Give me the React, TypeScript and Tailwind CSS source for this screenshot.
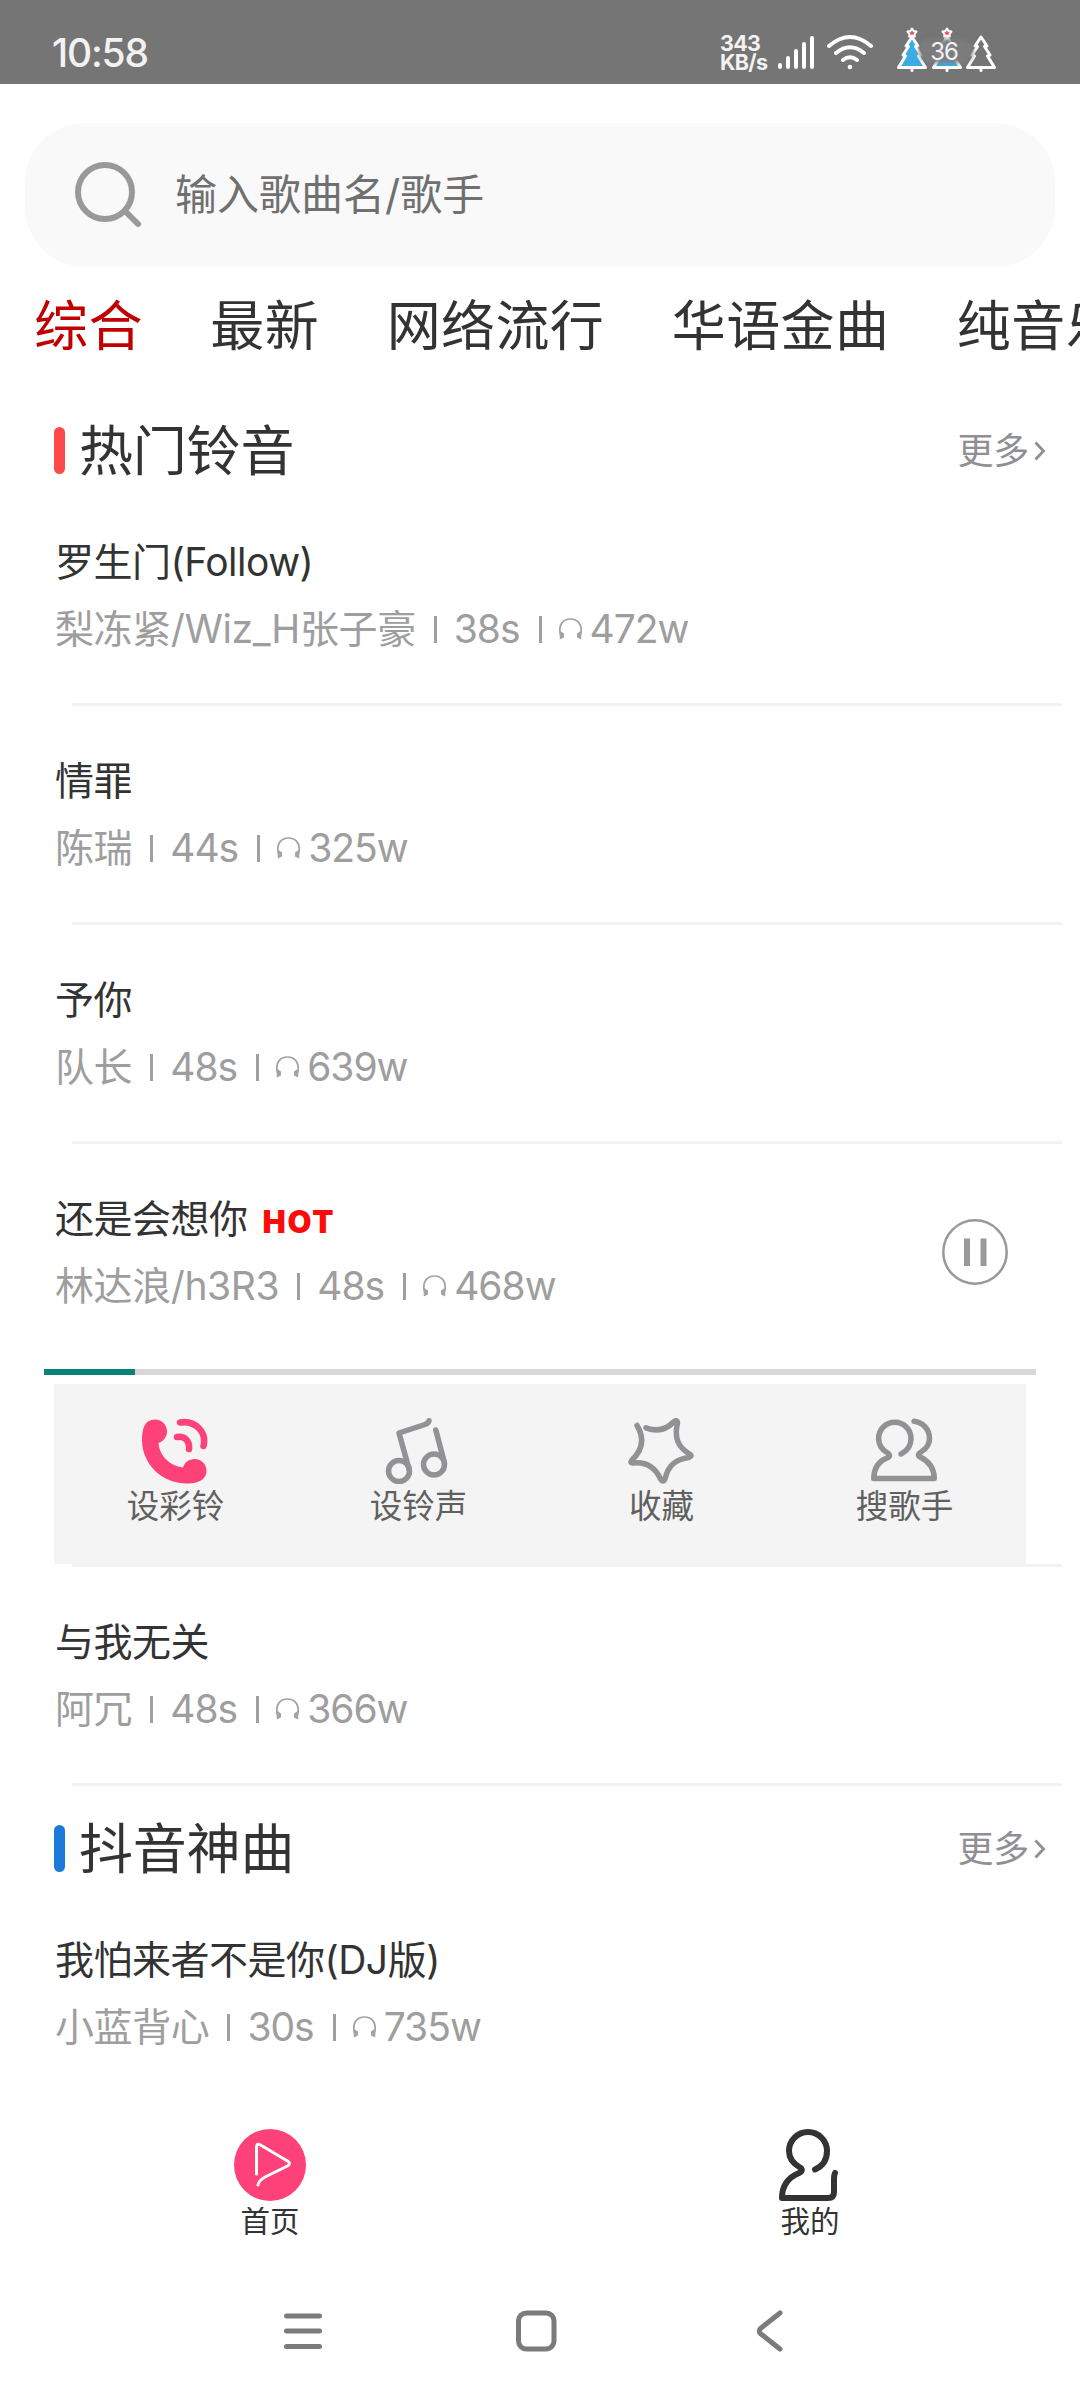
import React from 'react';

interface Song {
  title: string;
  artist: string;
  duration: string;
  plays: string;
  hot?: boolean;
  playing?: boolean;
}

interface Section {
  name: string;
  barClass: string;
  songs: Song[];
}

const tabs = ['综合', '最新', '网络流行', '华语金曲', '纯音乐'];

const sections: Section[] = [
  {
    name: '热门铃音',
    barClass: 'bg-[#fc4a4a]',
    songs: [
      { title: '罗生门(Follow)', artist: '梨冻紧/Wiz_H张子豪', duration: '38s', plays: '472w' },
      { title: '情罪', artist: '陈瑞', duration: '44s', plays: '325w' },
      { title: '予你', artist: '队长', duration: '48s', plays: '639w' },
      { title: '还是会想你', artist: '林达浪/h3R3', duration: '48s', plays: '468w', hot: true, playing: true },
      { title: '与我无关', artist: '阿冗', duration: '48s', plays: '366w' },
    ],
  },
  {
    name: '抖音神曲',
    barClass: 'bg-[#1a7ad9]',
    songs: [{ title: '我怕来者不是你(DJ版)', artist: '小蓝背心', duration: '30s', plays: '735w' }],
  },
];

const Tree: React.FC<{ x: number; fill: string; star?: boolean }> = ({ x, fill, star }) => (
  <g transform={`translate(${x} 0)`}>
    <path
      d="M0 10 L6 19 L3.5 19.5 L9 28 L6.5 29 L13.5 40.5 H-13.5 L-6.5 29 L-9 28 L-3.5 19.5 L-6 19 Z"
      fill={fill}
      stroke="#fff"
      strokeWidth="3"
      strokeLinejoin="round"
    />
    <path d="M0 41 V43.5" stroke="#fff" strokeWidth="3" strokeLinecap="round" />
    {star && (
      <path
        d="M0 1.5 L1.6 4 L4.5 4.6 L2.6 7 L2.8 9.6 L0 8.6 L-2.8 9.6 L-2.6 7 L-4.5 4.6 L-1.6 4 Z"
        fill="#f2566a"
        stroke="#fff"
        strokeWidth="2"
        strokeLinejoin="round"
      />
    )}
  </g>
);

const StatusBar = () => (
  <div className="flex h-[84px] shrink-0 items-start bg-[#757575] pl-[52px] text-[#f2f2f2]">
    <div className="mt-[29px] w-[668px] text-[39px] leading-[48px] font-medium tracking-[-1.2px]">10:58</div>
    <div className="mt-[34px] w-[58px] text-[21.5px] leading-[19px] font-bold tracking-[-0.7px]">
      <div>343</div>
      <div>KB/s</div>
    </div>
    <svg className="mt-[34px] h-[37px] w-[38px]" viewBox="0 0 38 37" stroke="#fff" strokeWidth="4" strokeLinecap="round">
      <path d="M2 31V33M10 24V33M18 17V33M26 10V33M34 4V33" />
    </svg>
    <svg className="mt-[32px] ml-[10px] h-[40px] w-[50px]" viewBox="0 0 50 40" fill="none" stroke="#fff" strokeWidth="4" strokeLinecap="round">
      <path d="M3 14 Q24 -4 45 14M10 21 Q24 9.5 38 21M17 28 Q24 22.5 31 28" />
      <circle cx="24" cy="35" r="2.3" fill="#fff" stroke="none" />
    </svg>
    <div className="relative mt-[27px] ml-[18px] h-[46px] w-[106px]">
      <svg className="h-[46px] w-[106px]" viewBox="0 0 106 46">
        <Tree x={18} fill="#3aade4" star />
        <Tree x={53} fill="#3aade4" star />
        <Tree x={87} fill="none" />
      </svg>
      <div className="absolute top-[12px] left-[25px] h-[24px] w-[54px] rounded-full bg-[#7c7c7c]/95 blur-[2px]" />
      <div className="absolute top-[12px] left-[34px] w-[32px] text-center text-[24px] leading-[26px] tracking-[-1px]">36</div>
    </div>
  </div>
);

const SearchBar = () => (
  <div className="mx-[25px] mt-[39px] flex h-[144px] shrink-0 items-center rounded-[60px] bg-[#f9f9f9] pl-[50px]">
    <svg className="h-[68px] w-[68px]" viewBox="0 0 68 68" fill="none" stroke="#999" strokeWidth="6" strokeLinecap="round">
      <circle cx="30" cy="31" r="27" />
      <path d="M50 50 L63 63" />
    </svg>
    <span className="ml-[32px] text-[42px] leading-[60px] text-[#707070]">输入歌曲名/歌手</span>
  </div>
);

const Tabs = () => (
  <div className="flex h-[121px] shrink-0 gap-[67.5px] overflow-hidden pt-[24px] pl-[34px] whitespace-nowrap">
    {tabs.map((tab, i) => (
      <span
        key={tab}
        className={`shrink-0 text-[54px] leading-[72px] tracking-[0.4px] ${i === 0 ? 'text-[#c00000]' : 'text-[#333]'}`}
      >
        {tab}
      </span>
    ))}
  </div>
);

const Headphones = () => (
  <svg className="mr-[8px] ml-[17px] h-[22px] w-[23px]" viewBox="0 0 23 22" fill="none">
    <path d="M1.6 17 C-1.5 6 5 1 11.5 1 S24.5 6 21.4 17" stroke="#a3a3a3" strokeWidth="1.7" />
    <path d="M.6 12.5 L5 15.5 V19.5 L.8 21.5Z M22.4 12.5 L18 15.5 V19.5 L22.2 21.5Z" fill="#a3a3a3" />
  </svg>
);

const PauseButton = () => (
  <svg className="mt-[75px] mr-[72px] h-[66px] w-[66px]" viewBox="0 0 66 66" fill="none" stroke="#999">
    <circle cx="33" cy="33" r="31.7" strokeWidth="2.5" />
    <path d="M25 19.5V47M41.5 19.5V47" strokeWidth="6" />
  </svg>
);

const PhoneIcon = () => (
  <svg className="h-[66px] w-[66px]" viewBox="0 0 66 66" fill="none" stroke="#ff4179" strokeWidth="6.5" strokeLinecap="round">
    <path
      d="M0 22C0 10 3 1.5 13 1.5C20 1.5 25 7 25 13.5C25 19 21.5 23 16.5 25C17.5 38 28 48 41 49.5C42.5 44.5 47 41 52.5 41C59.5 41 64.5 46 64.5 53C64.5 60.5 58.5 65 46 65.5C20 66 0 46 0 22Z"
      fill="#ff4179"
      stroke="none"
    />
    <path d="M35 19C42.5 17.5 48 23 47 31M38 4.5C53 2 65 14 61.5 28" />
  </svg>
);

const NoteIcon = () => (
  <svg className="h-[66px] w-[66px]" viewBox="0 0 66 66" fill="none" stroke="#919196" strokeWidth="5.5" strokeLinecap="round" strokeLinejoin="round">
    <circle cx="14" cy="53" r="10.5" />
    <circle cx="49" cy="46.5" r="10.5" />
    <path d="M24.3 52L14 15L40 6.5Q43.5 5 44 2.8M50.8 12L59.5 45" />
  </svg>
);

const StarIcon = () => (
  <svg className="h-[66px] w-[66px]" viewBox="0 0 66 66" fill="none" stroke="#919196" strokeWidth="5.5" strokeLinecap="round" strokeLinejoin="round">
    <path d="M9 7.5C16 19 15.5 31 4 42Q1.5 45.5 5 45C18 43.5 27 49 32.5 61Q35 65 37 61C40 47 48 41 61 39.5Q65 38 61.5 36C50 29 46 20 49.5 5Q49 1 45.5 4C38 12 28 13.5 18 9.8" />
  </svg>
);

const SingerIcon = () => (
  <svg className="h-[66px] w-[66px]" viewBox="0 0 66 66" fill="none" stroke="#919196" strokeWidth="5.5" strokeLinecap="round" strokeLinejoin="round">
    <path d="M30 36C36 33 40 27.5 40 20.5A16.2 16.2 0 0 0 7.6 20.5C7.6 27 11 31.5 16 34.5Q21 37.5 16 40C8 43 3 50 2.7 60.5H63.3C63 50 57 43 50 39.5Q45 37 50 34C55 31 58.5 27 58.5 20.5C58.5 11 51.5 4 43 3.2" />
  </svg>
);

const actions = [
  { label: '设彩铃', Icon: PhoneIcon },
  { label: '设铃声', Icon: NoteIcon },
  { label: '收藏', Icon: StarIcon },
  { label: '搜歌手', Icon: SingerIcon },
];

const PlayerPanel = () => (
  <div className="flex h-[198px] flex-col pt-[3px]">
    <div className="mx-[44px] h-[6px] bg-[#d7d7d7]">
      <div className="h-full w-[91px] bg-[#0b8275]" />
    </div>
    <div className="mx-[54px] mt-[9px] grid h-[180px] grid-cols-4 bg-[#f4f4f4] pt-[34px]">
      {actions.map(({ label, Icon }) => (
        <div key={label} className="flex flex-col items-center">
          <div className="pr-[2px]">
            <Icon />
          </div>
          <span className="mt-px text-[32.5px] leading-[44px] text-[#606060]">{label}</span>
        </div>
      ))}
    </div>
  </div>
);

const SongRow: React.FC<{ song: Song }> = ({ song }) => (
  <div className="shrink-0">
    <div className={`flex justify-between ${song.playing ? 'h-[222px]' : 'h-[216px]'}`}>
      <div className="pt-[45px] pl-[55px]">
        <div className="flex h-[60px] items-center text-[39px] leading-[60px] text-[#333]">
          <span className="tracking-[-0.5px]">{song.title}</span>
          {song.hot && (
            <span className="mt-[6px] ml-[15px] text-[31px] font-black tracking-[1.8px] text-[#ff0a0a]">HOT</span>
          )}
        </div>
        <div className="mt-[7px] flex h-[60px] items-center text-[39px] leading-[60px] tracking-[-1px] text-[#9e9e9e]">
          <span className="tracking-[-0.4px]">{song.artist}</span>
          <i className="mr-[17px] ml-[18px] h-[27px] w-[3px] bg-[#a0a0a0]" />
          <span>{song.duration}</span>
          <i className="ml-[19px] h-[27px] w-[3px] bg-[#a0a0a0]" />
          <Headphones />
          <span>{song.plays}</span>
        </div>
      </div>
      {song.playing && <PauseButton />}
    </div>
    {song.playing && <PlayerPanel />}
    <div className="mr-[18px] ml-[72px] h-[3px] bg-[#f2f2f2]" />
  </div>
);

const SectionHeader: React.FC<{ name: string; barClass: string }> = ({ name, barClass }) => (
  <div className="flex h-[99px] shrink-0 items-center pt-[26px] pr-[34px] pl-[54px]">
    <span className={`h-[47px] w-[11px] rounded-full ${barClass}`} />
    <span className="mt-[2px] ml-[14px] text-[54px] leading-[72px] tracking-[-0.2px] text-[#333]">{name}</span>
    <span className="mr-[5px] ml-auto text-[36px] leading-[54px] tracking-[-0.3px] text-[#8f8f94]">更多</span>
    <svg className="h-[20px] w-[12px]" viewBox="0 0 12 20" fill="none" stroke="#8f8f94" strokeWidth="2.8">
      <path d="M1.5 1.5L9.5 10L1.5 18.5" />
    </svg>
  </div>
);

const BottomNav = () => (
  <div className="grid h-[157px] shrink-0 grid-cols-2 bg-white pt-[29px] text-[29.5px] leading-[40px] text-[#333]">
    <div className="flex flex-col items-center">
      <svg className="h-[72px] w-[72px]" viewBox="0 0 72 72" fill="none">
        <circle cx="36" cy="36" r="36" fill="#ff4179" />
        <path
          d="M22.5 45V18.5Q22.5 13.5 26.5 16L53.5 32Q57.5 34.5 53.5 37L32 47.5Q25 51 24 56"
          stroke="#fff"
          strokeWidth="3"
          strokeLinecap="round"
          strokeLinejoin="round"
        />
      </svg>
      <span>首页</span>
    </div>
    <div className="flex flex-col items-center">
      <svg className="h-[72px] w-[72px]" viewBox="0 0 72 72" fill="none" stroke="#333" strokeWidth="6" strokeLinecap="round" strokeLinejoin="round">
        <path d="M41 40.5C49 37 53 30 53 22A19 19 0 0 0 15 22C15 30 20 35 26 38.5Q30 41.5 25 44C13 49 8 58 8 69H54Q60 69 60 63V50Q60 46 61 44" />
      </svg>
      <span>我的</span>
    </div>
  </div>
);

const SystemNav = () => (
  <div className="flex flex-1 bg-white pt-[52px] pl-[283px]">
    <svg className="h-[44px] w-[40px]" viewBox="0 0 40 44" stroke="#7b7b7b" strokeWidth="5" strokeLinecap="round">
      <path d="M3.5 7H36.5M3.5 22H36.5M3.5 37.5H36.5" />
    </svg>
    <svg className="ml-[192px] h-[44px] w-[42px]" viewBox="0 0 42 44" fill="none" stroke="#7b7b7b" strokeWidth="5">
      <rect x="3.5" y="4" width="35.5" height="36" rx="8" />
    </svg>
    <svg className="ml-[199px] h-[44px] w-[28px]" viewBox="0 0 28 44" fill="none" stroke="#7b7b7b" strokeWidth="5" strokeLinecap="round" strokeLinejoin="round">
      <path d="M24 4L5 19Q1.5 22 5 25L24 40" />
    </svg>
  </div>
);

export default function App() {
  return (
    <div className="flex h-[2400px] w-[1080px] flex-col overflow-hidden bg-white font-['Inter','Noto_Sans_CJK_SC',sans-serif]">
      <StatusBar />
      <SearchBar />
      <Tabs />
      <div className="flex h-[1712px] shrink-0 flex-col overflow-hidden">
        {sections.map((section) => (
          <React.Fragment key={section.name}>
            <SectionHeader name={section.name} barClass={section.barClass} />
            {section.songs.map((song) => (
              <SongRow key={song.title} song={song} />
            ))}
          </React.Fragment>
        ))}
      </div>
      <BottomNav />
      <SystemNav />
    </div>
  );
}
